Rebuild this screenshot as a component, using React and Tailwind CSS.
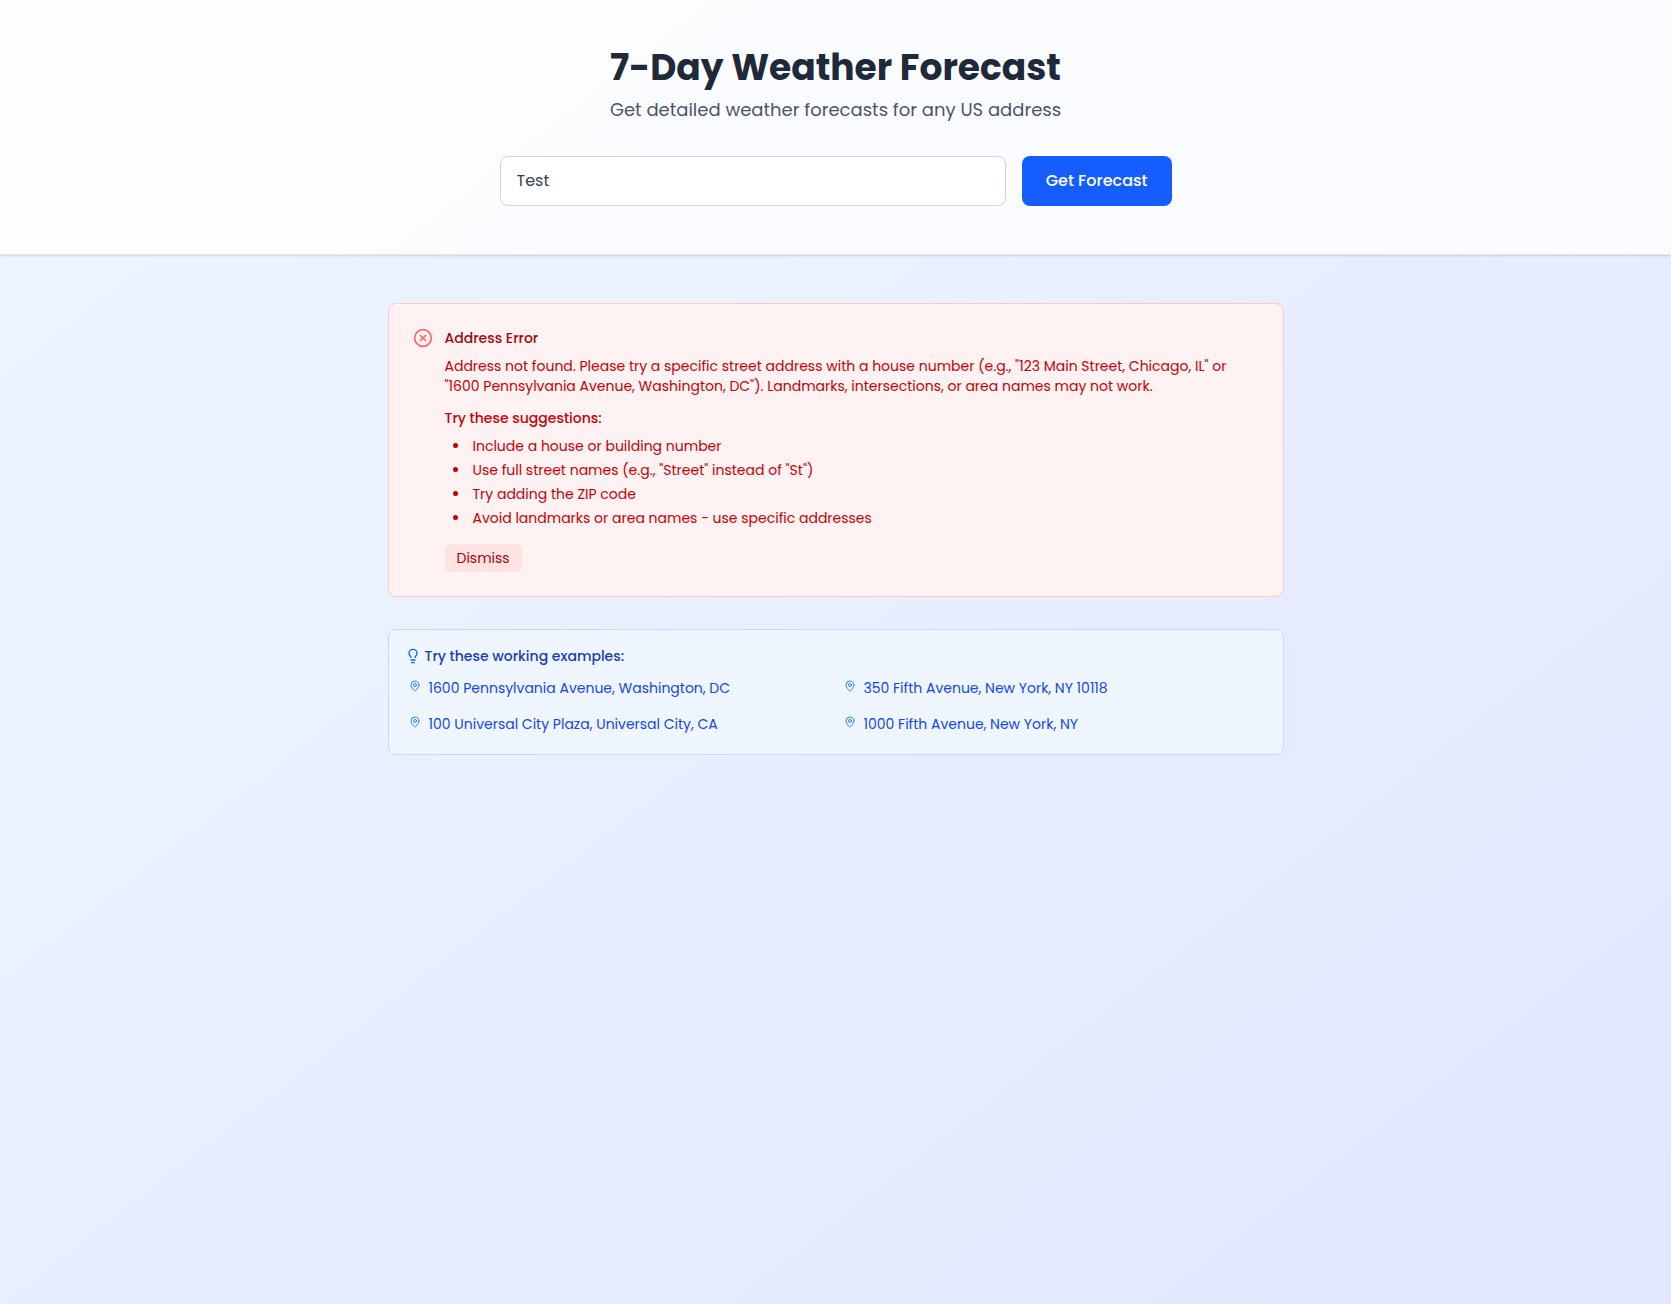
import { CircleX, Lightbulb, MapPin } from "lucide-react";

const suggestions = [
  "Include a house or building number",
  'Use full street names (e.g., "Street" instead of "St")',
  "Try adding the ZIP code",
  "Avoid landmarks or area names - use specific addresses",
];

const examples = [
  "1600 Pennsylvania Avenue, Washington, DC",
  "350 Fifth Avenue, New York, NY 10118",
  "100 Universal City Plaza, Universal City, CA",
  "1000 Fifth Avenue, New York, NY",
];

function Header() {
  return (
    <header className="border-b border-gray-200 bg-white/80 px-4 py-12 shadow-sm">
      <div className="mb-8 text-center">
        <h1 className="mb-2 text-4xl font-bold text-gray-800">7-Day Weather Forecast</h1>
        <p className="text-lg text-gray-600">Get detailed weather forecasts for any US address</p>
      </div>
      <form className="mx-auto flex max-w-2xl gap-4" onSubmit={(e) => e.preventDefault()}>
        <input
          type="text"
          aria-label="Address"
          defaultValue="Test"
          className="min-w-0 flex-1 rounded-lg border border-gray-300 bg-white px-4 py-3 text-base text-gray-700"
        />
        <button type="submit" className="rounded-lg bg-blue-600 px-6 py-3 text-base font-medium text-white">
          Get Forecast
        </button>
      </form>
    </header>
  );
}

function AddressError() {
  return (
    <section className="flex gap-3 rounded-lg border border-red-200 bg-red-50 p-6">
      <CircleX className="size-5 shrink-0 text-red-400" />
      <div className="min-w-0 flex-1 text-sm text-red-700">
        <h2 className="font-medium text-red-800">Address Error</h2>
        <p className="mt-2">
          Address not found. Please try a specific street address with a house number (e.g., "123 Main Street, Chicago,
          IL" or "1600 Pennsylvania Avenue, Washington, DC"). Landmarks, intersections, or area names may not work.
        </p>
        <p className="mt-3 font-medium">Try these suggestions:</p>
        <ul className="mt-2 ml-2 list-inside list-disc space-y-1">
          {suggestions.map((s) => (
            <li key={s}>{s}</li>
          ))}
        </ul>
        <button type="button" className="mt-4 rounded-md bg-red-100 px-3 py-1 text-red-800">
          Dismiss
        </button>
      </div>
    </section>
  );
}

function Examples() {
  return (
    <section className="rounded-lg border border-blue-200 bg-blue-50 p-4 text-sm">
      <h2 className="mb-2 flex items-center gap-1 font-medium text-blue-800">
        <Lightbulb className="size-4 text-blue-600" />
        Try these working examples:
      </h2>
      <div className="grid gap-2 md:grid-cols-2">
        {examples.map((e) => (
          <button key={e} type="button" className="flex items-start gap-2 px-1 py-1 text-left text-blue-700">
            <MapPin className="mt-0.5 size-3 shrink-0 text-blue-500" />
            {e}
          </button>
        ))}
      </div>
    </section>
  );
}

export default function App() {
  return (
    <div className="min-h-screen bg-linear-to-br from-blue-50 to-indigo-100 font-[Poppins,Inter,sans-serif]">
      <Header />
      <main className="px-4 py-12">
        <div className="mx-auto flex max-w-4xl flex-col gap-8">
          <AddressError />
          <Examples />
        </div>
      </main>
    </div>
  );
}
